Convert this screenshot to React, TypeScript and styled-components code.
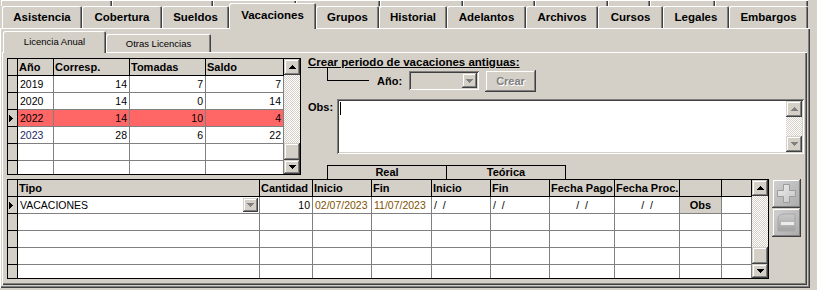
import React from 'react'
import styled, { createGlobalStyle, css } from 'styled-components'

// ── Palette ────────────────────────────────────────────────
const FACE = '#d4d0c8'
const SHADOW = '#808080'
const DARK = '#404040'

const GlobalStyle = createGlobalStyle`
  html, body { margin: 0; padding: 0; background: ${FACE}; }
  body {
    font-family: 'Liberation Sans', Arial, sans-serif;
    font-size: 11px;
    color: #000;
    overflow: hidden;
  }
  * { box-sizing: border-box; }
`

const raised = css`
  box-shadow: inset -1px -1px ${DARK}, inset 1px 1px ${FACE}, inset -2px -2px ${SHADOW}, inset 2px 2px #fff;
`
const sunken = css`
  box-shadow: inset 1px 1px ${SHADOW}, inset -1px -1px #fff, inset 2px 2px ${DARK}, inset -2px -2px ${FACE};
`
const panelEdge = css`
  box-shadow: inset 1px 1px #fff, inset -1px -1px ${DARK}, inset -2px -2px ${SHADOW};
`
const tabEdge = css`
  box-shadow: inset 1px 1px #fff, inset -1px 0 ${DARK}, inset -2px 0 ${SHADOW};
`

// ── Window / tabs ──────────────────────────────────────────
const Window = styled.div`
  width: 817px;
  height: 290px;
  overflow: hidden;
  background: ${FACE};
`

const BackRow = styled.div`
  display: flex;
  height: 6px;
  padding-left: 1px;
`

const GhostTab = styled.div<{ $w: number }>`
  width: ${(p) => p.$w}px;
  height: 100%;
  flex-shrink: 0;
  ${tabEdge}
`

const FrontRow = styled.div`
  display: flex;
  align-items: flex-end;
  height: 25px;
  margin-top: -3px;
  padding-left: 2px;
`

const Tab = styled.div<{ $w: number; $active?: boolean }>`
  width: ${(p) => p.$w}px;
  height: ${(p) => (p.$active ? 26 : 22)}px;
  margin-bottom: ${(p) => (p.$active ? -1 : 0)}px;
  padding-bottom: ${(p) => (p.$active ? 3 : 0)}px;
  position: relative;
  z-index: ${(p) => (p.$active ? 2 : 1)};
  flex-shrink: 0;
  background: ${FACE};
  border-radius: 2px 2px 0 0;
  display: flex;
  align-items: center;
  justify-content: center;
  font-size: 11.5px;
  font-weight: 700;
  ${tabEdge}
`

const OuterPanel = styled.div`
  width: 810px;
  height: 260px;
  background: ${FACE};
  display: flex;
  flex-direction: column;
  padding: 1px 2px 2px 1px;
  ${panelEdge}
`

const SubTabRow = styled.div`
  display: flex;
  align-items: flex-end;
  height: 23px;
  padding-left: 2px;
`

const SubTab = styled.div<{ $w: number; $active?: boolean }>`
  width: ${(p) => p.$w}px;
  height: ${(p) => (p.$active ? 22 : 18)}px;
  margin-bottom: ${(p) => (p.$active ? -1 : 0)}px;
  padding-bottom: ${(p) => (p.$active ? 2 : 0)}px;
  position: relative;
  z-index: ${(p) => (p.$active ? 2 : 1)};
  flex-shrink: 0;
  background: ${FACE};
  border-radius: 2px 2px 0 0;
  display: flex;
  align-items: center;
  justify-content: center;
  font-size: 9.5px;
  ${tabEdge}
`

const InnerPanel = styled.div`
  margin-left: 1px;
  width: 805px;
  height: 233px;
  display: flex;
  flex-direction: column;
  padding: 1px 2px 2px 1px;
  ${panelEdge}
`

const TopSection = styled.div`
  display: flex;
  height: 126px;
  padding-left: 4px;
`

const BottomSection = styled.div`
  display: flex;
  align-items: flex-start;
  height: 100px;
  padding-left: 4px;
`

// ── Grid ───────────────────────────────────────────────────
const GridFrame = styled.div<{ $w: number; $h: number; $top?: number }>`
  width: ${(p) => p.$w}px;
  height: ${(p) => p.$h}px;
  margin-top: ${(p) => p.$top ?? 0}px;
  border: 1px solid #000;
  background: #fff;
  display: flex;
  overflow: hidden;
  flex-shrink: 0;
`

const GridTable = styled.div`
  flex: 1;
  display: flex;
  flex-direction: column;
  overflow: hidden;
`

const GridRow = styled.div`
  display: flex;
  height: 17px;
  flex-shrink: 0;
`

type Kind = 'head' | 'ind' | 'data' | 'btn'

const Cell = styled.div<{ $w: number; $kind: Kind; $align?: 'left' | 'right' | 'center'; $bg?: string; $color?: string }>`
  width: ${(p) => p.$w}px;
  flex-shrink: 0;
  height: 100%;
  display: flex;
  align-items: center;
  justify-content: ${(p) => (p.$align === 'right' ? 'flex-end' : p.$align === 'center' ? 'center' : 'flex-start')};
  padding: 0 ${(p) => (p.$kind === 'head' ? '1px' : '2px')};
  white-space: pre;
  overflow: hidden;
  border-right: 1px solid ${(p) => (p.$kind === 'head' || p.$kind === 'ind' ? '#000' : SHADOW)};
  border-bottom: 1px solid ${(p) => (p.$kind === 'head' || p.$kind === 'ind' ? '#000' : SHADOW)};
  background: ${(p) => (p.$kind === 'data' ? p.$bg ?? '#fff' : FACE)};
  color: ${(p) => p.$color ?? '#000'};
  font-size: ${(p) => (p.$kind === 'data' ? '10.5px' : '11px')};
  font-weight: ${(p) => (p.$kind === 'data' || p.$kind === 'ind' ? 400 : 700)};
`

const ScrollBar = styled.div<{ $w?: number }>`
  width: ${(p) => p.$w ?? 16}px;
  flex-shrink: 0;
  display: flex;
  flex-direction: column;
  overflow: hidden;
`

const ScrollBtn = styled.div<{ $h: number }>`
  height: ${(p) => p.$h}px;
  flex-shrink: 0;
  background: ${FACE};
  display: flex;
  align-items: center;
  justify-content: center;
  ${raised}
`

const Track = styled.div<{ $h?: number }>`
  ${(p) => (p.$h ? `height: ${p.$h}px; flex-shrink: 0;` : 'flex: 1;')}
  background-color: #fff;
  background-image: repeating-conic-gradient(${FACE} 0 25%, #fff 0 50%);
  background-size: 2px 2px;
`

const Thumb = styled.div`
  height: 17px;
  flex-shrink: 0;
  background: ${FACE};
  ${raised}
`

const Arrow = ({ dir, color = '#000' }: { dir: 'up' | 'down'; color?: string }) => (
  <svg width="7" height="4" viewBox="0 0 7 4" shapeRendering="crispEdges">
    <polygon points={dir === 'up' ? '3.5,0 7,4 0,4' : '0,0 7,0 3.5,4'} fill={color} />
  </svg>
)

const RowPointer = () => (
  <svg width="4" height="7" viewBox="0 0 4 7" shapeRendering="crispEdges">
    <polygon points="0,0 4,3.5 0,7" fill="#000" />
  </svg>
)

const CellDrop = styled.div`
  width: 15px;
  height: 14px;
  margin-right: -1px;
  background: ${FACE};
  display: flex;
  align-items: center;
  justify-content: center;
  flex-shrink: 0;
  ${raised}
`

const CellText = styled.span`
  flex: 1;
`

// ── Right side ─────────────────────────────────────────────
const RightCol = styled.div`
  margin-left: 7px;
  width: 496px;
  display: flex;
  flex-direction: column;
  padding-top: 3px;
`

const SectionTitle = styled.div`
  font-size: 11.5px;
  font-weight: 700;
  line-height: 13px;
  text-decoration: underline;
`

const ControlsRow = styled.div`
  display: flex;
  align-items: flex-start;
  height: 24px;
  margin-top: -1px;
`

const Bracket = styled.div`
  width: 42px;
  height: 13px;
  margin-left: 19px;
  border-left: 1px solid #000;
  border-bottom: 1px solid #000;
`

const FieldLabel = styled.div<{ $w: number; $top: number }>`
  width: ${(p) => p.$w}px;
  margin-top: ${(p) => p.$top}px;
  font-size: 11px;
  font-weight: 700;
  line-height: 13px;
`

const Combo = styled.div`
  width: 70px;
  height: 19px;
  margin-top: 3px;
  padding: 2px;
  background: ${FACE};
  display: flex;
  justify-content: flex-end;
  ${sunken}
`

const ComboBtn = styled.div`
  width: 15px;
  height: 15px;
  background: ${FACE};
  display: flex;
  align-items: center;
  justify-content: center;
  ${raised}
`

const PushButton = styled.div`
  width: 51px;
  height: 22px;
  margin-top: 2px;
  margin-left: 6px;
  background: ${FACE};
  display: flex;
  align-items: center;
  justify-content: center;
  font-size: 11px;
  font-weight: 700;
  color: ${SHADOW};
  text-shadow: 1px 1px #fff;
  ${raised}
`

const ObsRow = styled.div`
  display: flex;
  align-items: flex-start;
  margin-top: 7px;
`

const Memo = styled.div`
  width: 467px;
  height: 55px;
  padding: 2px;
  background: #fff;
  display: flex;
  ${sunken}
`

const MemoText = styled.div`
  flex: 1;
  padding: 1px 0 0 1px;
`

const Caret = styled.div`
  width: 1px;
  height: 13px;
  background: #000;
`

const RTRow = styled.div`
  display: flex;
  margin-top: 11px;
  margin-left: 19px;
`

const RTBox = styled.div<{ $first?: boolean }>`
  width: ${(p) => (p.$first ? 120 : 119)}px;
  height: 14px;
  border: 1px solid #000;
  border-bottom: none;
  ${(p) => (p.$first ? '' : 'border-left: none;')}
  font-size: 11px;
  font-weight: 700;
  line-height: 13px;
  text-align: center;
`

// ── Add / remove buttons ───────────────────────────────────
const PMCol = styled.div`
  display: flex;
  flex-direction: column;
  margin-left: 3px;
`

const PMButton = styled.div`
  width: 29px;
  height: 29px;
  padding: 2px;
  background: linear-gradient(135deg, #d2d2d2, #aaaaaa);
  display: flex;
  align-items: center;
  justify-content: center;
  ${raised}
`

const PlusIcon = () => (
  <svg width="25" height="25" viewBox="0 0 25 25">
    <defs>
      <linearGradient id="pg" x1="0" y1="0" x2="1" y2="1">
        <stop offset="0" stopColor="#ededed" />
        <stop offset="1" stopColor="#c4c4c4" />
      </linearGradient>
    </defs>
    <polygon
      points="9.5,3.5 15.5,3.5 15.5,9.5 21.5,9.5 21.5,15.5 15.5,15.5 15.5,21.5 9.5,21.5 9.5,15.5 3.5,15.5 3.5,9.5 9.5,9.5"
      fill="url(#pg)"
      stroke="#9c9c9c"
    />
  </svg>
)

const MinusIcon = () => (
  <svg width="25" height="25" viewBox="0 0 25 25">
    <defs>
      <linearGradient id="mg" x1="0" y1="0" x2="0" y2="1">
        <stop offset="0" stopColor="#c9c9c9" />
        <stop offset="1" stopColor="#a2a2a2" />
      </linearGradient>
    </defs>
    <path d="M4 21 V10 Q4 4 10 4 H21 V21 Z" fill="url(#mg)" stroke="#a8a8a8" />
    <rect x="6.5" y="11.5" width="14" height="4" fill="#ececec" stroke="#b4b4b4" />
  </svg>
)

// ── Data ───────────────────────────────────────────────────
const backTabs = [111, 101, 83, 84, 83, 72, 73, 42, 65, 93]
const tabs: [string, number][] = [
  ['Asistencia', 80], ['Cobertura', 80], ['Sueldos', 67], ['Vacaciones', 87], ['Grupos', 63],
  ['Historial', 68], ['Adelantos', 79], ['Archivos', 72], ['Cursos', 65], ['Legales', 66], ['Embargos', 79],
]

const yearCols = [36, 76, 76, 78]
const years = [
  { y: '2019', c: '14', t: '7', s: '7' },
  { y: '2020', c: '14', t: '0', s: '14' },
  { y: '2022', c: '14', t: '10', s: '4', red: true },
  { y: '2023', c: '28', t: '6', s: '22', blue: true },
]

const detCols = [242, 53, 59, 60, 59, 59, 65, 65, 42, 30]
const detHead = ['Tipo', 'Cantidad', 'Inicio', 'Fin', 'Inicio', 'Fin', 'Fecha Pago', 'Fecha Proc.', '', '']
const DATE = '#7e5200'

export default function App() {
  return (
    <Window>
      <GlobalStyle />
      <BackRow>
        {backTabs.map((w, i) => <GhostTab key={i} $w={w} />)}
      </BackRow>
      <FrontRow>
        {tabs.map(([t, w]) => (
          <Tab key={t} $w={w} $active={t === 'Vacaciones'}>{t}</Tab>
        ))}
      </FrontRow>

      <OuterPanel>
        <SubTabRow>
          <SubTab $w={103} $active>Licencia Anual</SubTab>
          <SubTab $w={105}>Otras Licencias</SubTab>
        </SubTabRow>

        <InnerPanel>
          <TopSection>
            {/* Years grid */}
            <GridFrame $w={294} $h={117} $top={5}>
              <GridTable>
                <GridRow>
                  <Cell $w={10} $kind="ind" />
                  {['Año', 'Corresp.', 'Tomadas', 'Saldo'].map((h, i) => (
                    <Cell key={h} $w={yearCols[i]} $kind="head">{h}</Cell>
                  ))}
                </GridRow>
                {years.map((r) => (
                  <GridRow key={r.y}>
                    <Cell $w={10} $kind="ind" style={{ paddingLeft: 1 }}>{r.red && <RowPointer />}</Cell>
                    <Cell $w={yearCols[0]} $kind="data" $bg={r.red ? '#ff6666' : undefined} $color={r.blue ? '#1c2a66' : undefined}>{r.y}</Cell>
                    <Cell $w={yearCols[1]} $kind="data" $align="right" $bg={r.red ? '#ff6666' : undefined}>{r.c}</Cell>
                    <Cell $w={yearCols[2]} $kind="data" $align="right" $bg={r.red ? '#ff6666' : undefined}>{r.t}</Cell>
                    <Cell $w={yearCols[3]} $kind="data" $align="right" $bg={r.red ? '#ff6666' : undefined}>{r.s}</Cell>
                  </GridRow>
                ))}
                {[0, 1].map((k) => (
                  <GridRow key={k}>
                    <Cell $w={10} $kind="ind" />
                    {yearCols.map((w, i) => <Cell key={i} $w={w} $kind="data" />)}
                  </GridRow>
                ))}
              </GridTable>
              <ScrollBar>
                <ScrollBtn $h={16}><Arrow dir="up" /></ScrollBtn>
                <Track $h={68} />
                <Thumb />
                <ScrollBtn $h={14}><Arrow dir="down" /></ScrollBtn>
              </ScrollBar>
            </GridFrame>

            <RightCol>
              <SectionTitle>Crear periodo de vacaciones antiguas:</SectionTitle>
              <ControlsRow>
                <Bracket />
                <FieldLabel $w={40} $top={7} style={{ paddingLeft: 8 }}>Año:</FieldLabel>
                <Combo>
                  <ComboBtn><Arrow dir="down" color={SHADOW} /></ComboBtn>
                </Combo>
                <PushButton>Crear</PushButton>
              </ControlsRow>
              <ObsRow>
                <FieldLabel $w={29} $top={2}>Obs:</FieldLabel>
                <Memo>
                  <MemoText><Caret /></MemoText>
                  <ScrollBar>
                    <ScrollBtn $h={16}><Arrow dir="up" color={SHADOW} /></ScrollBtn>
                    <Track />
                    <ScrollBtn $h={16}><Arrow dir="down" color={SHADOW} /></ScrollBtn>
                  </ScrollBar>
                </Memo>
              </ObsRow>
              <RTRow>
                <RTBox $first>Real</RTBox>
                <RTBox>Teórica</RTBox>
              </RTRow>
            </RightCol>
          </TopSection>

          <BottomSection>
            {/* Detail grid */}
            <GridFrame $w={762} $h={100}>
              <GridTable>
                <GridRow>
                  <Cell $w={10} $kind="ind" />
                  {detHead.map((h, i) => <Cell key={i} $w={detCols[i]} $kind="head">{h}</Cell>)}
                </GridRow>
                <GridRow>
                  <Cell $w={10} $kind="ind" style={{ paddingLeft: 1 }}><RowPointer /></Cell>
                  <Cell $w={detCols[0]} $kind="data">
                    <CellText>VACACIONES</CellText>
                    <CellDrop><Arrow dir="down" color={SHADOW} /></CellDrop>
                  </Cell>
                  <Cell $w={detCols[1]} $kind="data" $align="right">10</Cell>
                  <Cell $w={detCols[2]} $kind="data" $color={DATE}>02/07/2023</Cell>
                  <Cell $w={detCols[3]} $kind="data" $color={DATE}>11/07/2023</Cell>
                  <Cell $w={detCols[4]} $kind="data">{'/  /'}</Cell>
                  <Cell $w={detCols[5]} $kind="data">{'/  /'}</Cell>
                  <Cell $w={detCols[6]} $kind="data" $align="center">{'/  /'}</Cell>
                  <Cell $w={detCols[7]} $kind="data" $align="center">{'/  /'}</Cell>
                  <Cell $w={detCols[8]} $kind="btn" $align="center" style={{ borderColor: SHADOW }}>Obs</Cell>
                  <Cell $w={detCols[9]} $kind="data" />
                </GridRow>
                {[0, 1, 2, 3].map((k) => (
                  <GridRow key={k}>
                    <Cell $w={10} $kind="ind" />
                    {detCols.map((w, i) => <Cell key={i} $w={w} $kind="data" />)}
                  </GridRow>
                ))}
              </GridTable>
              <ScrollBar>
                <ScrollBtn $h={16}><Arrow dir="up" /></ScrollBtn>
                <Track $h={51} />
                <Thumb />
                <ScrollBtn $h={14}><Arrow dir="down" /></ScrollBtn>
              </ScrollBar>
            </GridFrame>

            <PMCol>
              <PMButton><PlusIcon /></PMButton>
              <PMButton><MinusIcon /></PMButton>
            </PMCol>
          </BottomSection>
        </InnerPanel>
      </OuterPanel>
    </Window>
  )
}
